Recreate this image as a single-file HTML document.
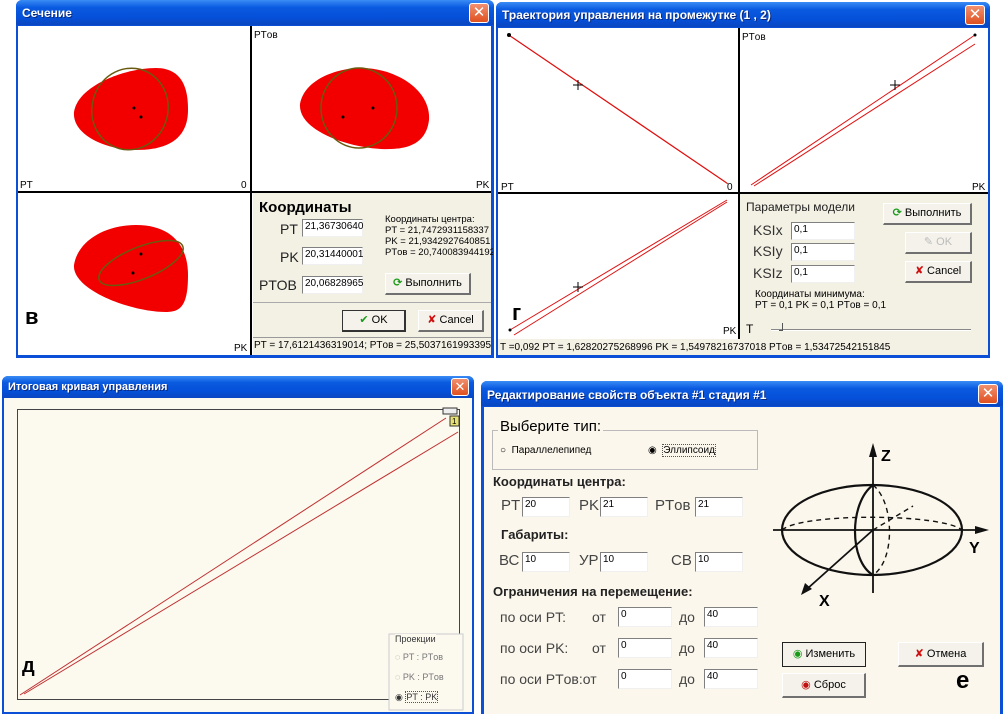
<!DOCTYPE html>
<html><head><meta charset="utf-8"><style>
*{margin:0;padding:0;box-sizing:border-box}
body{width:1007px;height:714px;background:#fff;position:relative;overflow:hidden;font-family:"Liberation Sans","DejaVu Sans",sans-serif;font-size:11px;color:#000}
.a{position:absolute}
.win{position:absolute;background:#0a4fd6;border-radius:6px 6px 0 0}
.tb{position:absolute;left:0;right:0;top:0;height:25px;background:linear-gradient(#3a8cf5,#0a5ae0 30%,#0550d8 70%,#0a46c0);border-radius:6px 6px 0 0;color:#fff;font-weight:bold;font-size:12px;padding:6px 0 0 6px;white-space:nowrap;text-shadow:1px 1px #0a2a80}
.x{position:absolute;right:5px;top:3px;width:20px;height:20px;background:linear-gradient(#f09070,#e05020);border:1px solid #fff;border-radius:3px;color:#fff;font-size:15px;line-height:18px;text-align:center;font-weight:bold}
.in{position:absolute;background:#fff;border-top:1px solid #808080;border-left:1px solid #808080;border-bottom:1px solid #f0f0f0;border-right:1px solid #f0f0f0;font-size:10px;padding:1px 2px}
.btn{position:absolute;background:#f4f2ea;border:1px solid #fff;border-right:2px solid #707070;border-bottom:2px solid #707070;font-size:11px;text-align:center;line-height:18px}
</style></head><body>

<!-- Window 1 -->
<div class="win" style="left:16px;top:0;width:478px;height:358px">
<div class="tb">Сечение</div><div class="x">✕</div>
<svg class="a" style="left:0;top:0" width="478" height="358">
<rect x="2" y="26" width="473" height="329" fill="#fff"/>
<line x1="235" y1="26" x2="235" y2="355" stroke="#000" stroke-width="2"/>
<line x1="2" y1="192" x2="475" y2="192" stroke="#000" stroke-width="2"/>
<path d="M58,112 C62,85 110,68 140,68 C170,68 172,95 172,110 C172,140 150,150 120,150 C90,150 56,135 58,112Z" fill="#f20000"/>
<ellipse cx="114" cy="109" rx="38" ry="41" transform="rotate(15 114 109)" fill="none" stroke="#6a5a10" stroke-width="1.5"/>
<circle cx="118" cy="108" r="1.5"/><circle cx="125" cy="117" r="1.5"/>
<path d="M284,104 C288,80 320,68 345,68 C380,68 415,90 413,120 C410,145 390,150 365,149 C330,147 282,130 284,104Z" fill="#f20000"/>
<ellipse cx="343" cy="108" rx="38" ry="40" fill="none" stroke="#6a5a10" stroke-width="1.5"/>
<circle cx="357" cy="108" r="1.5"/><circle cx="327" cy="117" r="1.5"/>
<path d="M58,265 C62,240 90,225 120,225 C155,225 172,245 172,275 C172,305 165,312 150,312 C115,312 56,290 58,265Z" fill="#f20000"/>
<ellipse cx="125" cy="263" rx="45" ry="16" transform="rotate(-22 125 263)" fill="none" stroke="#6a5a10" stroke-width="1.5"/>
<circle cx="125" cy="254" r="1.5"/><circle cx="117" cy="273" r="1.5"/>
</svg>
<div class="a" style="left:237px;top:193px;width:238px;height:162px;background:#f3f0e4"></div>
<div class="a" style="left:238px;top:30px;font-size:10px">PTов</div>
<div class="a" style="left:4px;top:180px;font-size:10px">PT</div>
<div class="a" style="left:225px;top:180px;font-size:10px">0</div>
<div class="a" style="left:460px;top:180px;font-size:10px">PK</div>
<div class="a" style="left:218px;top:343px;font-size:10px">PK</div>
<div class="a" style="left:9px;top:306px;font-size:22px;font-weight:bold;line-height:22px">в</div>
<div class="a" style="left:243px;top:199px;font-size:15px;font-weight:bold">Координаты</div>
<div class="a" style="left:264px;top:221px;font-size:14px;color:#222">PT</div>
<div class="a" style="left:264px;top:249px;font-size:14px;color:#222">PK</div>
<div class="a" style="left:243px;top:277px;font-size:14px;color:#222">PTOB</div>
<div class="in" style="left:286px;top:219px;width:61px;height:18px">21,36730640</div>
<div class="in" style="left:286px;top:247px;width:61px;height:18px">20,31440001</div>
<div class="in" style="left:286px;top:276px;width:61px;height:18px">20,06828965</div>
<div class="a" style="left:369px;top:214px;font-size:9.5px;line-height:11px;white-space:nowrap;overflow:hidden;width:108px">Координаты центра:<br>PT = 21,7472931158337<br>PK = 21,9342927640851<br>PTов = 20,7400839441925</div>
<div class="btn" style="left:369px;top:273px;width:86px;height:22px"><span style="color:#1a9a1a;font-weight:bold">⟳</span> Выполнить</div>
<div class="a" style="left:237px;top:302px;width:238px;height:1px;background:#aaa"></div>
<div class="btn" style="left:326px;top:310px;width:64px;height:22px;border:1px solid #333;border-right:2px solid #333;border-bottom:2px solid #333"><span style="color:#1a9a1a;font-weight:bold">✔</span> OK</div>
<div class="btn" style="left:402px;top:310px;width:66px;height:22px"><span style="color:#d01010;font-weight:bold">✘</span> Cancel</div>
<div class="a" style="left:237px;top:337px;width:238px;height:1px;background:#999"></div>
<div class="a" style="left:238px;top:340px;font-size:10px;white-space:nowrap">PT = 17,6121436319014;  PTов = 25,5037161993395</div>
</div>

<!-- Window 2 -->
<div class="win" style="left:496px;top:2px;width:494px;height:356px">
<div class="tb">Траектория управления на промежутке (1 , 2)</div><div class="x">✕</div>
<svg class="a" style="left:0;top:0" width="494" height="356">
<rect x="2" y="26" width="490" height="327" fill="#fff"/>
<rect x="244" y="192" width="248" height="145" fill="#f3f0e4"/>
<rect x="2" y="337" width="490" height="16" fill="#f3f0e4"/>
<line x1="243" y1="26" x2="243" y2="337" stroke="#000" stroke-width="2"/>
<line x1="2" y1="191" x2="492" y2="191" stroke="#000" stroke-width="2"/>
<g stroke="#e01010" stroke-width="1" fill="none">
<line x1="13" y1="33" x2="231" y2="181"/><line x1="14" y1="34" x2="232" y2="182"/>
<line x1="255" y1="183" x2="479" y2="33"/><line x1="258" y1="184" x2="479" y2="42"/>
<line x1="14" y1="328" x2="231" y2="198"/><line x1="18" y1="333" x2="231" y2="200"/>
</g>
<g stroke="#000"><path d="M82,78v10M77,83h10M399,78v10M394,83h10M82,280v10M77,285h10"/></g>
<circle cx="13" cy="33" r="2"/><circle cx="479" cy="33" r="1.5"/><circle cx="14" cy="328" r="1.5"/>
</svg>
<div class="a" style="left:246px;top:30px;font-size:10px">PTов</div>
<div class="a" style="left:5px;top:180px;font-size:10px">PT</div>
<div class="a" style="left:231px;top:180px;font-size:10px">0</div>
<div class="a" style="left:476px;top:180px;font-size:10px">PK</div>
<div class="a" style="left:227px;top:324px;font-size:10px">PK</div>
<div class="a" style="left:16px;top:300px;font-size:22px;font-weight:bold;line-height:22px">г</div>
<div class="a" style="left:250px;top:198px;font-size:12px;color:#222">Параметры модели</div>
<div class="a" style="left:257px;top:220px;font-size:14px;color:#333">KSIx</div>
<div class="a" style="left:257px;top:241px;font-size:14px;color:#333">KSIy</div>
<div class="a" style="left:257px;top:263px;font-size:14px;color:#333">KSIz</div>
<div class="in" style="left:295px;top:220px;width:64px;height:18px">0,1</div>
<div class="in" style="left:295px;top:241px;width:64px;height:18px">0,1</div>
<div class="in" style="left:295px;top:263px;width:64px;height:18px">0,1</div>
<div class="btn" style="left:387px;top:201px;width:89px;height:22px"><span style="color:#1a9a1a;font-weight:bold">⟳</span> Выполнить</div>
<div class="btn" style="left:409px;top:230px;width:67px;height:22px;color:#bbb">✎ OK</div>
<div class="btn" style="left:409px;top:259px;width:67px;height:22px"><span style="color:#d01010;font-weight:bold">✘</span> Cancel</div>
<div class="a" style="left:259px;top:287px;font-size:10px;line-height:11px">Координаты минимума:<br>PT = 0,1 PK = 0,1 PTов = 0,1</div>
<div class="a" style="left:250px;top:320px;font-size:12px">T</div>
<div class="a" style="left:275px;top:327px;width:200px;height:2px;border-top:1px solid #888;border-bottom:1px solid #fff"></div>
<div class="a" style="left:283px;top:321px;width:4px;height:8px;border-right:1px solid #555;border-bottom:1px solid #555"></div>
<div class="a" style="left:4px;top:340px;font-size:10px;white-space:nowrap">T =0,092 PT = 1,62820275268996 PK = 1,54978216737018 PTов = 1,53472542151845</div>
</div>

<!-- Window 3 -->
<div class="win" style="left:2px;top:376px;width:472px;height:338px">
<div class="tb" style="height:22px;padding-top:5px;font-size:11px">Итоговая кривая управления</div><div class="x" style="top:2px;width:18px;height:18px;line-height:16px;font-size:13px">✕</div>
<div class="a" style="left:2px;top:22px;width:468px;height:314px;background:#fcf9ef"></div>
<svg class="a" style="left:0;top:0" width="472" height="338">
<rect x="15.5" y="33.5" width="442" height="290" fill="#fcf9ef" stroke="#444"/>
<g stroke="#c03030" fill="none"><line x1="18" y1="319" x2="444" y2="42"/><line x1="22" y1="318" x2="456" y2="56"/></g>
<rect x="441" y="32" width="14" height="6" fill="#eee" stroke="#333"/>
<rect x="448" y="40" width="9" height="10" fill="#e8e070" stroke="#333"/>
<text x="450" y="48" font-size="8" font-family="Liberation Sans">1</text>
<rect x="387" y="258" width="74" height="76" fill="#fcf9ef" stroke="#ccc"/>
</svg>
<div class="a" style="left:393px;top:258px;font-size:9px;background:#fcf9ef;color:#333">Проекции</div>
<div class="a" style="left:393px;top:276px;font-size:9px;color:#777">◌ PT : PTов</div>
<div class="a" style="left:393px;top:296px;font-size:9px;color:#777">◌ PK : PTов</div>
<div class="a" style="left:393px;top:316px;font-size:9px;color:#333">◉ <span style="border:1px dotted #555">PT : PK</span></div>
<div class="a" style="left:20px;top:280px;font-size:20px;font-weight:bold;line-height:20px">д</div>
</div>

<!-- Window 4 -->
<div class="win" style="left:481px;top:381px;width:522px;height:333px">
<div class="tb" style="height:25px;padding-top:7px;font-size:12px">Редактирование свойств объекта #1 стадия #1</div><div class="x">✕</div>
<div class="a" style="left:3px;top:26px;width:516px;height:307px;background:#fbf7ec"></div>
<div class="a" style="left:11px;top:49px;width:266px;height:40px;border:1px solid #bbb"></div>
<div class="a" style="left:17px;top:37px;font-size:15px;background:#fbf7ec;padding:0 2px">Выберите тип:</div>
<div class="a" style="left:19px;top:64px;font-size:10px">○ &nbsp;Параллелепипед</div>
<div class="a" style="left:167px;top:64px;font-size:10px">◉ &nbsp;<span style="border:1px dotted #555">Эллипсоид</span></div>
<div class="a" style="left:12px;top:93px;font-size:13px;font-weight:bold;color:#222">Координаты центра:</div>
<div class="a" style="left:20px;top:116px;font-size:15px;color:#444">PT</div><div class="in" style="left:41px;top:116px;width:48px;height:20px">20</div>
<div class="a" style="left:98px;top:116px;font-size:15px;color:#444">PK</div><div class="in" style="left:119px;top:116px;width:48px;height:20px">21</div>
<div class="a" style="left:174px;top:116px;font-size:15px;color:#444">PTов</div><div class="in" style="left:214px;top:116px;width:48px;height:20px">21</div>
<div class="a" style="left:20px;top:146px;font-size:13px;font-weight:bold;color:#222">Габариты:</div>
<div class="a" style="left:18px;top:171px;font-size:15px;color:#444">ВС</div><div class="in" style="left:41px;top:171px;width:48px;height:20px">10</div>
<div class="a" style="left:98px;top:171px;font-size:15px;color:#444">УР</div><div class="in" style="left:119px;top:171px;width:48px;height:20px">10</div>
<div class="a" style="left:190px;top:171px;font-size:15px;color:#444">СВ</div><div class="in" style="left:214px;top:171px;width:48px;height:20px">10</div>
<div class="a" style="left:12px;top:203px;font-size:13px;font-weight:bold;color:#222">Ограничения на перемещение:</div>
<div class="a" style="left:19px;top:228px;font-size:14px;color:#444">по оси PT:</div><div class="a" style="left:111px;top:228px;font-size:14px;color:#444">от</div><div class="in" style="left:137px;top:226px;width:54px;height:20px">0</div><div class="a" style="left:198px;top:228px;font-size:14px;color:#444">до</div><div class="in" style="left:223px;top:226px;width:54px;height:20px">40</div>
<div class="a" style="left:19px;top:259px;font-size:14px;color:#444">по оси PK:</div><div class="a" style="left:111px;top:259px;font-size:14px;color:#444">от</div><div class="in" style="left:137px;top:257px;width:54px;height:20px">0</div><div class="a" style="left:198px;top:259px;font-size:14px;color:#444">до</div><div class="in" style="left:223px;top:257px;width:54px;height:20px">40</div>
<div class="a" style="left:19px;top:290px;font-size:14px;color:#444">по оси PTов:от</div><div class="in" style="left:137px;top:288px;width:54px;height:20px">0</div><div class="a" style="left:198px;top:290px;font-size:14px;color:#444">до</div><div class="in" style="left:223px;top:288px;width:54px;height:20px">40</div>
<svg class="a" style="left:290px;top:60px" width="230" height="170" font-family="Liberation Sans" font-weight="bold">
<g stroke="#111" fill="none" stroke-width="2.2">
<ellipse cx="101" cy="89" rx="90" ry="45"/>
<path d="M102,44 C78,62 78,120 102,134"/>
</g>
<g stroke="#111" fill="none" stroke-width="1.4" stroke-dasharray="5,4">
<path d="M11,89 C30,72 170,72 191,89"/>
<path d="M102,44 C124,62 124,120 102,134"/>
<line x1="102" y1="89" x2="142" y2="65"/>
</g>
<g stroke="#111" stroke-width="1.8"><line x1="102" y1="6" x2="102" y2="152"/><line x1="2" y1="89" x2="212" y2="89"/><line x1="102" y1="89" x2="36" y2="148"/></g>
<path d="M102,2 l-4,14 h8z M218,89 l-14,-4 v8z M30,154 l4,-12 l7,6z" fill="#111"/>
<text x="110" y="20" font-size="16">Z</text><text x="198" y="112" font-size="16">Y</text><text x="48" y="165" font-size="16">X</text>
</svg>
<div class="btn" style="left:301px;top:261px;width:84px;height:25px;border:1px solid #222;line-height:22px"><span style="color:#1a9a1a">◉</span> Изменить</div>
<div class="btn" style="left:417px;top:261px;width:86px;height:25px;line-height:22px"><span style="color:#d01010;font-weight:bold">✘</span> Отмена</div>
<div class="btn" style="left:301px;top:292px;width:84px;height:25px;line-height:22px"><span style="color:#c01010">◉</span> Сброс</div>
<div class="a" style="left:475px;top:288px;font-size:24px;font-weight:bold;line-height:24px">е</div>
</div>
</body></html>
